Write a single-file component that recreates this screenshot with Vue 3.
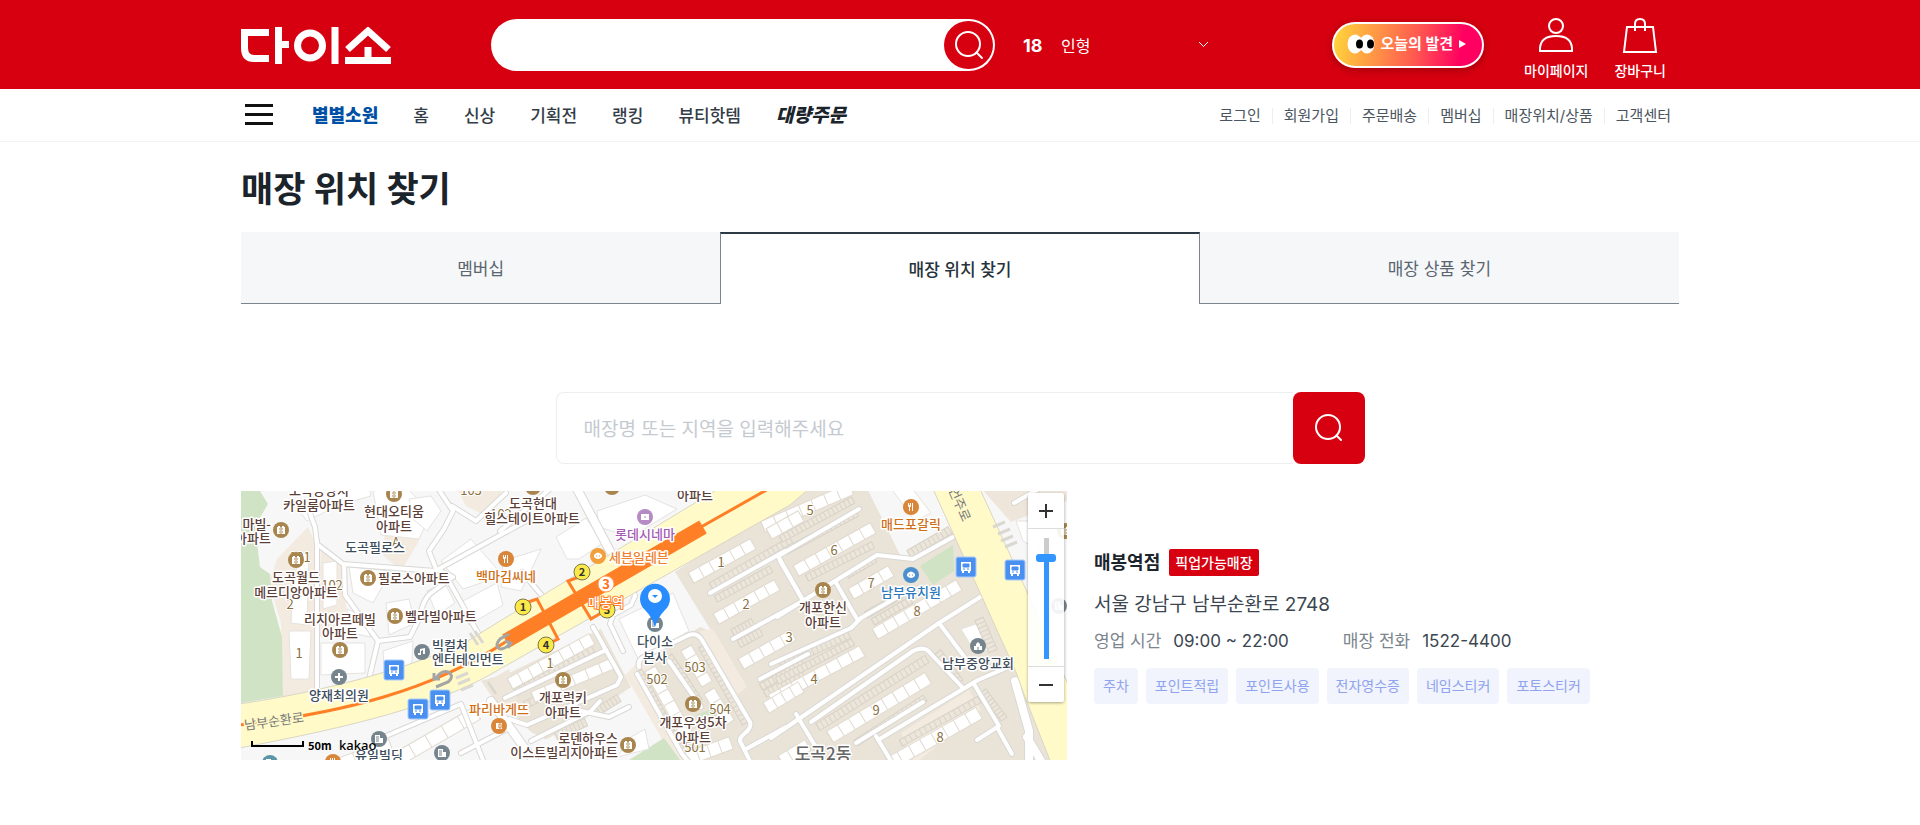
<script setup>
import { ref } from 'vue'

const keyword = ref('')
const storeQuery = ref('')
const zoomLevel = ref(86)

const menu = ['홈', '신상', '기획전', '랭킹', '뷰티핫템']
const userLinks = ['로그인', '회원가입', '주문배송', '멤버십', '매장위치/상품', '고객센터']
const tabs = ['멤버십', '매장 위치 찾기', '매장 상품 찾기']
const activeTab = ref(1)
const services = ['주차', '포인트적립', '포인트사용', '전자영수증', '네임스티커', '포토스티커']

// A strip between two points, divided into cells; used for apartment rows and parking bays.
function strip([x1, y1, x2, y2, n, depth]) {
  const len = Math.hypot(x2 - x1, y2 - y1)
  const angle = (Math.atan2(y2 - y1, x2 - x1) * 180) / Math.PI
  const cells = Array.from({ length: n }, (_, i) => `M${((len * i) / n).toFixed(1)} ${-depth / 2}v${depth}`).join('')
  return { len, depth, cells, transform: `translate(${x1} ${y1}) rotate(${angle.toFixed(1)})` }
}

const homes = [
  [522, 36, 610, -2, 7, 12], [555, 80, 632, 37, 7, 12], [610, 103, 650, 80, 4, 12],
  [634, 143, 718, 94, 8, 12], [530, 209, 621, 160, 8, 12], [589, 246, 687, 187, 9, 13],
  [648, 273, 738, 222, 8, 13], [540, 270, 567, 254, 3, 12],
  [450, 87, 512, 53, 6, 12], [475, 128, 536, 94, 6, 12], [500, 173, 552, 144, 5, 12],
  [525, 217, 560, 196, 4, 12], [528, 43, 560, 25, 3, 12],
  [269, 193, 351, 148, 8, 12], [292, 206, 373, 172, 6, 11],
  [445, 157, 466, 193, 4, 12], [468, 200, 488, 232, 3, 12], [409, 178, 447, 246, 6, 12],
  [446, 268, 490, 252, 4, 13], [155, 269, 236, 222, 5, 14], [96, 275, 150, 255, 3, 14]
].map(strip)

const parking = [
  [470, 95, 550, 49, 18, 7], [475, 108, 530, 78, 13, 7], [492, 142, 512, 131, 6, 8],
  [498, 153, 520, 141, 6, 8], [520, 196, 562, 172, 10, 7], [524, 203, 562, 183, 9, 7],
  [540, 48, 612, 9, 18, 7], [545, 60, 616, 22, 16, 7], [566, 87, 632, 54, 15, 7],
  [606, 84, 634, 68, 7, 7], [625, 124, 660, 104, 8, 7], [632, 131, 670, 109, 9, 7],
  [668, 63, 709, 39, 10, 8], [540, 175, 608, 144, 15, 7], [536, 190, 612, 151, 18, 7],
  [577, 236, 686, 168, 26, 8], [615, 252, 684, 207, 16, 7], [660, 252, 748, 203, 18, 7],
  [697, 161, 719, 191, 8, 7], [738, 128, 752, 160, 8, 9], [742, 200, 763, 228, 9, 7],
  [275, 201, 352, 158, 16, 7], [284, 214, 362, 177, 16, 7], [398, 180, 440, 258, 18, 7],
  [428, 165, 458, 210, 10, 7], [461, 155, 505, 232, 18, 8], [315, 245, 345, 231, 8, 8],
  [354, 222, 378, 207, 7, 8]
].map(strip)

const streets = [
  'M66 14l8 22 2 17 26 20 92 7 91-50', 'M76 50v155', 'M103 73l1 31 33 46-9 38',
  'M137 150l32-4 9-18q4-20 12-26l22-16-17-8-7-18 15-22 9-18-20-30',
  'M211 15l24 15 30-28', 'M204 83l38 68', 'M138 248l82-35 22 56', 'M220 262l46-24',
  'M259 40l50-42', 'M281 81l22 26', 'M382 160l-13-27 3-9 18-10 4-9-2-8',
  'M352 136l28 50-4 8-90 40-18-6', 'M264 207l101-48', 'M290 250l60-30 9-10 M340 220l28 6 20-10',
  'M539 64l79-46', 'M536 126l100-62 36 4 40-22', 'M539 70l22 38', 'M594 90l22 38',
  'M530 173l80-36 10-10 45-26', 'M530 247l168-115 46-29', 'M698 132l30 40',
  'M570 231l102-71q12-6 18 3l31 33', 'M555 223l30 50', 'M637 249l100-60 28-12',
  'M733 193l25 42-22 14', 'M757 238l14 25', 'M615 252l67-41', 'M635 245l18 30',
  'M469 102l75-42', 'M492 148l68-37', 'M519 188l48-25', 'M537 65l34 60',
  'M398 176q-2-8 8-12l42-20q8-3 13 5l48 82q2 6-6 12-6 5-3 9l10 20',
  'M396 183l45 80 10 12', 'M428 170l32 46', 'M505 258l40-22', 'M773 12l54-31'
]

const lots = [
  '98,14 130,5 128,-4 90,-4 60,22 66,30', '132,0 165,-4 190,22 178,48 140,44',
  '168,8 190,5 200,20 186,40 172,28', '108,76 150,80 132,112 112,102', '82,72 96,70 96,114 82,118',
  '48,140 70,140 68,188 50,188', '52,92 60,60 68,66 66,134 50,132', '106,118 120,124 130,146 110,142',
  '145,112 168,108 174,132 148,144', '80,152 124,152 124,182 80,184', '200,70 230,48 256,78 240,92 222,98',
  '186,100 204,92 214,112 196,124', '222,110 256,92 262,114 228,134', '142,160 172,150 170,186 144,190',
  '356,20 404,4 436,18 390,46 358,36', '315,46 345,27 362,52 338,68 326,68', '262,70 300,58 280,100 260,96',
  '378,128 432,102 448,140 398,170', '652,0 670,-4 690,22 674,30', '720,138 738,132 750,160 732,158',
  '775,30 790,30 800,60 782,50', '390,246 404,238 408,258 376,266'
]

// [text, x, y, colour class, anchor]
const places = [
  ['도곡동양지', 78, 4], ['카일룸아파트', 78, 19], ['현대오티움', 153, 25], ['아파트', 153, 40],
  ['마빌-', 30, 38, '', 'end'], ['아파트', 30, 52, '', 'end'], ['도곡필로스', 134, 61, 'slate'],
  ['도곡월드', 55, 91], ['메르디앙아파트', 55, 106], ['필로스아파트', 137, 92, '', 'start'],
  ['리치아르떼빌', 99, 133], ['아파트', 99, 147], ['벨라빌아파트', 164, 130, '', 'start'],
  ['빅컬쳐', 191, 159, 'slate', 'start'], ['엔터테인먼트', 191, 173, 'slate', 'start'],
  ['양재최의원', 98, 209, 'slate'], ['파리바게뜨', 258, 223, 'orange'], ['유일빌딩', 138, 269, 'slate'],
  ['도곡현대', 292, 17], ['힐스테이트아파트', 291, 32], ['아파트', 454, 9], ['롯데시네마', 404, 48, 'purple'],
  ['세븐일레븐', 368, 71, 'amber', 'start'], ['백마김씨네', 265, 90, 'orange'],
  ['개포럭키', 322, 211], ['아파트', 322, 226], ['로덴하우스', 377, 252, '', 'end'],
  ['이스트빌리지아파트', 377, 266, '', 'end'], ['다이소', 414, 155, 'slate'], ['본사', 414, 171, 'slate'],
  ['개포우성5차', 452, 236], ['아파트', 452, 251], ['매드포갈릭', 670, 38, 'orange'],
  ['남부유치원', 670, 106, 'blue'], ['개포한신', 582, 121], ['아파트', 582, 136],
  ['남부중앙교회', 737, 177, 'slate']
]

const numbers = [
  ['1', 58, 167], ['2', 49, 118], ['101', 59, 71], ['102', 91, 99], ['103', 230, 4], ['102', 260, 28],
  ['A', 155, 56], ['1', 309, 177], ['1', 480, 76], ['2', 505, 118], ['3', 548, 151], ['502', 416, 193],
  ['503', 454, 181], ['504', 479, 223], ['501', 454, 261], ['5', 569, 24], ['6', 593, 64], ['7', 630, 97],
  ['8', 676, 125], ['4', 573, 193], ['9', 635, 224], ['8', 699, 251]
]

const glyphs = {
  home: 'M-4 4v-7h1v-1h2v1h2v-1h2v1h1v7z',
  tower: 'M-4 4v-8h5v3h3v5z',
  food: 'M-3-4v3q0 1 1 1v4h1v-4q1 0 1-1v-3h-1v2h-1v-2zM1-4v8h1V-4z',
  bread: 'M-3-3h6v6h-6z',
  music: 'M-2-3l5-1v6h-2v-4l-2 1v4h-3v-2h2z',
  cross: 'M-1-4h2v3h3v2h-3v3h-2v-3h-3v-2h3z',
  film: 'M-4-3h8v6h-8z',
  face: 'M-4-1q4-5 8 0v2q-4 4-8 0z',
  church: 'M-4 4v-4h2v-2l2-2 2 2v2h2v4z'
}
const details = {
  home: 'M-2-1h1M1-1h1M-2 2h1M1 2h1M0-3v7',
  tower: 'M-3-2h3M-3 0h3M-3 2h3',
  bread: 'M0-2v4h2v-4z',
  film: 'M-1 0h2',
  face: 'M-2 0h1M1 0h1',
  church: 'M0 1v3'
}
const spots = [
  [153, 3, 'home', 'brown'], [40, 39, 'home', 'brown'], [55, 69, 'home', 'brown'], [127, 87, 'home', 'brown'],
  [154, 125, 'home', 'brown'], [99, 159, 'home', 'brown'], [181, 161, 'music', 'slate'], [98, 186, 'cross', 'slate'],
  [265, 68, 'food', 'orange'], [258, 235, 'bread', 'orange'], [138, 248, 'tower', 'slate'], [201, 262, 'tower', 'slate'],
  [29, 272, 'tower', 'teal'], [92, 271, 'food', 'orange'], [292, -4, 'home', 'brown'], [371, -4, 'home', 'brown'],
  [404, 26, 'film', 'purple'], [357, 65, 'face', 'amber'], [414, 133, 'tower', 'slate'], [322, 189, 'home', 'brown'],
  [452, 213, 'home', 'brown'], [387, 254, 'home', 'brown'], [670, 16, 'food', 'orange'], [670, 84, 'face', 'blue'],
  [582, 99, 'home', 'brown'], [737, 155, 'church', 'slate'], [824, 40, 'home', 'brown'], [818, 115, 'tower', 'slate']
]
const buses = [[153, 179], [177, 218], [199, 209], [725, 76], [774, 79]]
const exits = [['1', 282, 116], ['2', 341, 81], ['3', 366, 119], ['4', 305, 154]]
</script>

<template>
  <div class="page">
    <header>
      <div class="top">
        <div class="wrap top-row">
          <a href="#" class="logo" aria-label="다이소">
            <svg width="150" height="37" viewBox="0 0 150 37" fill="none" stroke="#fff" stroke-width="7">
              <path d="M28 5.500H3.500V21Q3.500 31.500 13 31.500H28" />
              <path d="M37.500 0V37M37.500 17.500H48M94 0V37M127 20V31M104 33.500H150" />
              <ellipse cx="69" cy="18.500" rx="12.500" ry="12.500" />
              <path d="M106.500 22.500L127 4L147.500 22.500" />
            </svg>
          </a>
          <form class="search" role="search" @submit.prevent>
            <input v-model="keyword" type="search" aria-label="상품 검색" />
            <button type="submit" aria-label="검색">
              <svg width="32" height="32" viewBox="0 0 32 32" fill="none" stroke="#fff" stroke-width="2" stroke-linecap="round">
                <circle cx="15" cy="15" r="12" /><path d="M23.500 23.500L29 29" />
              </svg>
            </button>
          </form>
          <button class="trend" type="button">
            <b>18</b><span>인형</span>
            <svg width="11" height="7" viewBox="0 0 11 7" fill="none" stroke="#fff" stroke-width="1"><path d="M1 1l4.500 4.500L10 1" /></svg>
          </button>
          <div class="quick">
            <a href="#" class="today">
              <svg width="28" height="20" viewBox="0 0 28 20">
                <ellipse cx="8" cy="10" rx="7.500" ry="9.500" fill="#fff" /><ellipse cx="20" cy="10" rx="7.500" ry="9.500" fill="#fff" />
                <ellipse cx="12.500" cy="10" rx="3.500" ry="4.500" /><ellipse cx="23.500" cy="10" rx="3.500" ry="4.500" />
              </svg>
              <span>오늘의 발견</span>
              <svg width="7" height="8" viewBox="0 0 7 8" fill="#fff"><path d="M0 0l7 4-7 4z" /></svg>
            </a>
            <a href="#" class="icon-link">
              <svg width="36" height="36" viewBox="0 0 36 36" fill="none" stroke="#fff" stroke-width="2">
                <circle cx="18" cy="9" r="7" /><path d="M2 34v-3q1-12 16-12t16 12v3z" />
              </svg>
              <span>마이페이지</span>
            </a>
            <a href="#" class="icon-link">
              <svg width="36" height="36" viewBox="0 0 36 36" fill="none" stroke="#fff" stroke-width="2">
                <path d="M5 10h26l3 25H2zM13 14V7q0-5 5-5t5 5v7" />
              </svg>
              <span>장바구니</span>
            </a>
          </div>
        </div>
      </div>
      <div class="sub">
        <nav class="wrap sub-row">
          <button class="burger" type="button" aria-label="전체 메뉴"><i></i><i></i><i></i></button>
          <ul class="menu">
            <li><a href="#" class="wish">별별소원</a></li>
            <li v-for="m in menu" :key="m"><a href="#">{{ m }}</a></li>
            <li><a href="#" class="bulk">대량주문</a></li>
          </ul>
          <ul class="links">
            <li v-for="l in userLinks" :key="l"><a href="#">{{ l }}</a></li>
          </ul>
        </nav>
      </div>
    </header>

    <main class="wrap">
      <h1>매장 위치 찾기</h1>
      <div class="tabs" role="tablist">
        <button v-for="(t, i) in tabs" :key="t" type="button" role="tab" :aria-selected="i === activeTab"
          :class="{ on: i === activeTab }" @click="activeTab = i">{{ t }}</button>
      </div>

      <form class="finder" @submit.prevent>
        <input v-model="storeQuery" type="text" aria-label="매장 검색" placeholder="매장명 또는 지역을 입력해주세요" />
        <button type="submit" aria-label="매장 찾기">
          <svg width="30" height="30" viewBox="0 0 30 30" fill="none" stroke="#fff" stroke-width="2" stroke-linecap="round">
            <circle cx="14" cy="14" r="12" /><path d="M22.500 22.500L27 27" />
          </svg>
        </button>
      </form>

      <section class="result">
        <div class="map">
          <svg class="canvas" viewBox="0 0 826 269" preserveAspectRatio="xMidYMid slice" role="img" aria-label="매봉역점 지도">
            <rect width="826" height="269" fill="#f7f7f7" />
            <path fill="#f3ebdf" d="M36 68l31-32 9 20v150H42L40 132 28 92zM80 55l22 18 4 55-30 20zM145 25l30-5 3 30-18 30-18-16zM215-5h50l-20 30-20-10z" />
            <path fill="#eae3d7" d="M240 190l28-8 92-44 30 58-80 55-20-10zM385 184l74-48 12 5-37-60L566-5h126l125 280H440z" />
            <path fill="#f7f7f7" d="M369 134l62-52 25 55-62 45zM625-5h67l20 45-50 30zM350 225l40-24 42 70H240l60-20z" />
            <path fill="#f3ebdf" d="M384 184l20-20 50 110h-18zM458 140l14-2 34 58-12 10zM660 242l68-43 12 20-66 54z" />
            <path fill="#eee6db" d="M738-5h90v14l-58 22zM242 193l26-15 12 45-20-4z" />
            <path fill="#d0e3c5" d="M0 0h19l8 13-13 22 5 41 10 7 2 27 10 36 1 59-42 7zM679 75l33-21 1 26-21 14zM388 269l35-22 16 22zM455 224l22-8 6 10-20 8z" />
            <polygon v-for="p in lots" :key="p" :points="p" fill="#fff" stroke="#e5e3e0" stroke-width="1" />
            <g v-for="(s, i) in parking" :key="'p' + i" :transform="s.transform">
              <rect :y="-s.depth / 2" :width="s.len" :height="s.depth" fill="#ebe5da" stroke="#d8d2c8" stroke-width="1" />
              <path :d="s.cells" stroke="#d8d2c8" stroke-width="1" />
            </g>
            <g v-for="(s, i) in homes" :key="'h' + i" :transform="s.transform">
              <rect :y="-s.depth / 2" :width="s.len" :height="s.depth" fill="#fff" stroke="#e0dad0" stroke-width="1" />
              <path :d="s.cells" stroke="#e0dad0" stroke-width="1" />
            </g>
            <g fill="none" stroke-linejoin="round" stroke-linecap="round">
              <path v-for="s in streets" :key="'a' + s" :d="s" stroke="#d9d8d6" stroke-width="6" />
              <path d="M334-6l35 66M250 210l50 70M774 190l14 50v34M800 270l-14-24" stroke="#d9d8d6" stroke-width="10" />
              <path v-for="s in streets" :key="'b' + s" :d="s" stroke="#fff" stroke-width="4" />
              <path d="M334-6l35 66M250 210l50 70M774 190l14 50v34M800 270l-14-24" stroke="#fff" stroke-width="8" />
            </g>
            <path d="M-2 213C60 204 150 185 225 151L259 130 477-2H568L549 14 259 178C200 214 110 236-2 257z" fill="#fffac8" stroke="#d9d6c4" />
            <path d="M692-2L775 181 784 206 810 272H830V200L787 103 739-2z" fill="#fffac8" stroke="#d9d6c4" />
            <path d="M752 36l12-5M757 43l12-5M760 50l12-5M764 56l12-5M215 187l12-5M217 193l12-5M220 199l12-5M229 142l8 12M234 140l8 12M247 191l8 12" stroke="#dad8d0" stroke-width="3" />
            <g fill="none" stroke="#ff7f27">
              <path d="M-2 234C100 222 190 200 266 150M460 36L536-7" stroke-width="3" />
              <path d="M265 150L462 36" stroke-width="15" />
              <path d="M284 112l12-4 21 40-10 5M338 86l-11 4 23 38 12-7" stroke-width="3" />
            </g>
            <g fill="none" stroke="#a5a5a5" stroke-width="3">
              <path d="M268 143l-9 5q-6 7 0 10 5 0 10-5M195 196l12-5q7-6 0-10-6-2-12 6" />
              <path d="M264 150l6 2-3 5M193 182v6h6" />
            </g>
            <text class="road" x="33" y="235" transform="rotate(-8 33 230)">남부순환로</text>
            <text class="road" x="719" y="18" transform="rotate(66 719 13)">언주로</text>
            <text v-for="(n, i) in numbers" :key="'n' + i" class="num" :x="n[1]" :y="n[2]">{{ n[0] }}</text>
            <g v-for="(s, i) in spots" :key="'s' + i" :transform="`translate(${s[0]} ${s[1]})`" :class="'dot-' + s[3]">
              <circle r="8" />
              <path :d="glyphs[s[2]]" fill="#fff" />
              <path v-if="details[s[2]]" class="detail" :d="details[s[2]]" />
            </g>
            <g v-for="(b, i) in buses" :key="'b' + i" :transform="`translate(${b[0]} ${b[1]})`">
              <rect x="-10" y="-10" width="20" height="20" rx="2" fill="#4a90f0" stroke="#a9cbf8" />
              <path d="M-5-5h10v9h-1v2h-2v-2h-4v2h-2v-2h-1z" fill="#fff" /><path d="M-3-3h6v3h-6zM-3 2h2M1 2h2" fill="#4a90f0" stroke="#4a90f0" />
            </g>
            <text class="town" x="582" y="269">도곡2동</text>
            <text v-for="(p, i) in places" :key="'t' + i" :class="['place', p[3]]" :x="p[1]" :y="p[2]" :text-anchor="p[4] || 'middle'">{{ p[0] }}</text>
            <g v-for="e in exits" :key="'e' + e[0]" :transform="`translate(${e[1]} ${e[2]})`">
              <circle r="8" fill="#fbe94a" stroke="#7b774a" stroke-width="1" /><text class="exit" y="4">{{ e[0] }}</text>
            </g>
            <circle cx="365" cy="93" r="8" fill="#fff" stroke="#ff9a55" stroke-width="1" />
            <text class="line" x="365" y="98">3</text>
            <text class="station" x="365" y="116">매봉역</text>
            <path d="M414 136q-3-10-10-17a15 15 0 1 1 20 0q-7 7-10 17z" fill="#288cff" />
            <circle cx="414" cy="105" r="7" fill="#fff" /><path d="M411 104h6l-3 3z" fill="#288cff" />
            <path d="M11 250v5h51v-5" fill="none" stroke="#000" stroke-width="2" />
            <text class="scale" x="67" y="259">50m</text>
            <text class="kakao" x="98" y="259">kakao</text>
          </svg>
          <div class="zoom">
            <button type="button" aria-label="확대" @click="zoomLevel = Math.min(100, zoomLevel + 8)">
              <svg width="14" height="14" viewBox="0 0 14 14" stroke="#333" stroke-width="2"><path d="M7 0v14M0 7h14" /></svg>
            </button>
            <div class="rail"><input v-model.number="zoomLevel" type="range" min="0" max="100" aria-label="지도 확대 수준" /></div>
            <button type="button" aria-label="축소" @click="zoomLevel = Math.max(0, zoomLevel - 8)">
              <svg width="14" height="14" viewBox="0 0 14 14" stroke="#333" stroke-width="2"><path d="M0 7h14" /></svg>
            </button>
          </div>
        </div>

        <article class="store">
          <h2>매봉역점 <span class="badge">픽업가능매장</span></h2>
          <p class="address">서울 강남구 남부순환로 2748</p>
          <dl>
            <div><dt>영업 시간</dt><dd>09:00 ~ 22:00</dd></div>
            <div><dt>매장 전화</dt><dd>1522-4400</dd></div>
          </dl>
          <ul class="tags"><li v-for="s in services" :key="s">{{ s }}</li></ul>
        </article>
      </section>
    </main>
  </div>
</template>

<style>
body { margin: 0; background: #fff; }
</style>

<style scoped>
.page { font-family: Inter, "Noto Sans CJK KR", sans-serif; color: #1b232b; font-size: 16px; line-height: 24px; }
.page *, .page *::before { box-sizing: border-box; }
.wrap { width: min(1438px, 100% - 40px); margin: 0 auto; }
a { color: inherit; text-decoration: none; }
button, input { font: inherit; color: inherit; }
button { border: 0; padding: 0; background: none; cursor: pointer; }
ul, dl, dd, p, h1, h2 { margin: 0; padding: 0; }
ul { list-style: none; display: flex; }
svg { display: block; flex: none; }

.top { background: #d70010; color: #fff; }
.top-row { display: flex; align-items: center; min-height: 89px; }
.logo { margin: 2px 100px 0 0; }
.search { flex: 0 1 504px; display: flex; align-items: center; height: 52px; border-radius: 26px; background: #fff; padding: 2px; }
.search input { flex: 1; min-width: 0; border: 0; background: none; outline: 0; padding: 0 24px; color: #1b232b; }
.search button { width: 49px; height: 48px; border-radius: 50%; background: #d70010; display: grid; place-items: center; }
.trend { display: flex; align-items: center; width: 186px; margin-left: 28px; padding-top: 2px; text-align: left; }
.trend b { width: 38px; font-size: 18px; }
.trend svg { margin: 0 0 2px auto; }
.quick { display: flex; align-items: center; margin-left: auto; padding-right: 13px; }
.today { display: flex; align-items: center; gap: 6px; height: 46px; padding: 0 16px 2px 13px; border: 2px solid #fff; border-radius: 23px; background: linear-gradient(100deg, #ffd83a, #ff5a50 55%, #ff0060 85%); box-shadow: 0 2px 8px rgba(0, 0, 0, .25); font-size: 15px; font-weight: 700; margin-right: 40px; }
.icon-link { display: flex; flex-direction: column; align-items: center; gap: 8px; font-size: 14px; line-height: 20px; font-weight: 500; margin-top: 9px; }
.icon-link + .icon-link { margin-left: 26px; }

.sub { border-bottom: 1px solid #f2f3f5; }
.sub-row { display: flex; align-items: center; height: 52px; padding-top: 2px; }
.burger { display: grid; gap: 6px; width: 28px; margin: 0 39px 4px 4px; }
.burger i { height: 3px; background: #111; }
.menu { gap: 35px; font-size: 17px; font-weight: 500; color: #333d47; }
.menu .wish { color: #0050a5; font-weight: 900; font-size: 18px; }
.menu .bulk { color: #1b232b; font-weight: 900; font-size: 19px; font-style: italic; }
.links { margin-left: auto; padding-right: 8px; font-size: 15px; color: #4b5560; }
.links li { display: flex; align-items: center; }
.links li + li::before { content: ""; width: 1px; height: 16px; margin: 0 11px; background: #eceef0; }

h1 { margin-top: 23px; font-size: 35px; line-height: 48px; font-weight: 700; }
.tabs { display: grid; grid-template-columns: repeat(3, 1fr); margin-top: 19px; }
.tabs button { height: 72px; padding-top: 2px; border-bottom: 1px solid #7c858e; background: #f5f7f9; color: #5a6570; font-size: 17px; }
.tabs .on { background: #fff; color: #26323c; font-weight: 500; border: solid #7c858e; border-width: 2px 1px 0; border-top-color: #2c3a46; }

.finder { display: flex; width: min(809px, 100%); margin: 88px auto 0; }
.finder input { flex: 1; min-width: 0; height: 72px; padding: 2px 27px 0; border: 1px solid #eceef0; border-right: 0; border-radius: 8px 0 0 8px; font-size: 19px; outline: 0; }
.finder input::placeholder { color: #c5cad0; opacity: 1; }
.finder button { width: 72px; border-radius: 8px; background: #d70010; display: grid; place-items: center; }

.result { display: flex; gap: 27px; align-items: center; margin-top: 27px; }
.map { position: relative; flex: 0 1 826px; height: 269px; overflow: hidden; }
.canvas { width: 100%; height: 100%; font-family: "Noto Sans CJK KR", sans-serif; }
.place, .road, .num, .town { font-size: 13px; font-weight: 500; fill: #5b4038; stroke: #fff; stroke-width: 3px; paint-order: stroke; stroke-linejoin: round; }
.place.slate { fill: #3c4c5a; }
.place.orange { fill: #d07018; }
.place.amber { fill: #ee8230; }
.place.purple { fill: #a55bb5; }
.place.blue { fill: #2b78bd; }
.road { fill: #777; text-anchor: middle; font-weight: 400; stroke: #fffac8; }
.num { fill: #8a7040; text-anchor: middle; font-weight: 400; stroke-width: 2px; }
.town { fill: #666; font-size: 17px; text-anchor: middle; }
.station { font-size: 13px; font-weight: 500; fill: #fff; stroke: #ff7f27; stroke-width: 2px; paint-order: stroke; stroke-linejoin: round; text-anchor: middle; }
.exit, .line { font-size: 11px; font-weight: 700; text-anchor: middle; fill: #333; }
.line { font-size: 13px; fill: #ff7020; }
.scale { font-size: 11px; font-weight: 700; }
.kakao { font-family: "Noto Sans", sans-serif; font-size: 13px; font-weight: 500; }
.dot-brown { fill: #a9854e; stroke: #a9854e; }
.dot-slate { fill: #76858d; stroke: #76858d; }
.dot-orange { fill: #d9863a; stroke: #d9863a; }
.dot-amber { fill: #f2a03d; stroke: #f2a03d; }
.dot-purple { fill: #b58ac5; stroke: #b58ac5; }
.dot-blue { fill: #4b90ce; stroke: #4b90ce; }
.dot-teal { fill: #5b97a8; stroke: #5b97a8; }
[class^="dot-"] circle, [class^="dot-"] path { stroke: none; }
[class^="dot-"] .detail { stroke: inherit; stroke-width: 1px; fill: none; }

.zoom { position: absolute; top: 2px; right: 3px; width: 36px; border-radius: 3px; overflow: hidden; background: rgba(255, 255, 255, .9); box-shadow: 0 1px 3px rgba(0, 0, 0, .35); }
.zoom button { display: grid; place-items: center; width: 100%; height: 35px; background: #fff; }
.rail { display: flex; justify-content: center; height: 139px; padding: 9px 0; border: solid #ddd; border-width: 1px 0; }
.rail input { appearance: none; writing-mode: vertical-lr; direction: rtl; width: 20px; height: 121px; margin: 0; background: linear-gradient(#ccc 17%, #3396ff 17%) center / 5px 100% no-repeat; }
.rail input::-webkit-slider-thumb { appearance: none; width: 20px; height: 8px; border-radius: 3px; background: #3396ff; }

.store { flex: 1; min-width: 0; padding-top: 1px; }
h2 { display: flex; align-items: center; gap: 9px; font-size: 18px; line-height: 27px; font-weight: 700; }
.badge { padding: 0 6px; border-radius: 2px; background: #d70010; color: #fff; font-size: 14px; font-weight: 500; }
.address { margin-top: 15px; font-size: 19px; line-height: 28px; color: #3c4650; }
dl { display: flex; gap: 54px; margin-top: 9px; font-size: 17px; line-height: 26px; }
dl div { display: flex; gap: 12px; }
dt { color: #7c858e; }
dd { color: #3c4650; }
.tags { flex-wrap: wrap; gap: 8px; margin-top: 14px; }
.tags li { padding: 0 9px; border-radius: 4px; background: #f1f3fd; color: #8fa3ee; font-size: 14px; line-height: 36px; }
</style>
